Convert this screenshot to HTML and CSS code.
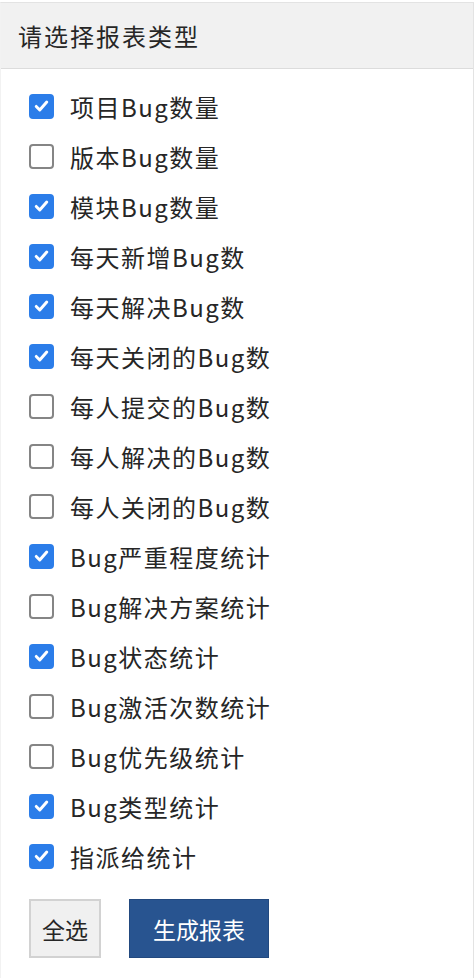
FILE: index.html
```html
<!DOCTYPE html>
<html lang="zh">
<head>
<meta charset="utf-8">
<link rel="stylesheet" href="styles.css">
</head>
<body>
<div class="panel">
  <div class="panel-head">请选择报表类型</div>
  <ul class="list">
    <li class="item"><span class="box on"><svg viewBox="0 0 24 24"><path d="M6 12.5l4 4 8-9"/></svg></span>项目Bug数量</li>
    <li class="item"><span class="box"></span>版本Bug数量</li>
    <li class="item"><span class="box on"><svg viewBox="0 0 24 24"><path d="M6 12.5l4 4 8-9"/></svg></span>模块Bug数量</li>
    <li class="item"><span class="box on"><svg viewBox="0 0 24 24"><path d="M6 12.5l4 4 8-9"/></svg></span>每天新增Bug数</li>
    <li class="item"><span class="box on"><svg viewBox="0 0 24 24"><path d="M6 12.5l4 4 8-9"/></svg></span>每天解决Bug数</li>
    <li class="item"><span class="box on"><svg viewBox="0 0 24 24"><path d="M6 12.5l4 4 8-9"/></svg></span>每天关闭的Bug数</li>
    <li class="item"><span class="box"></span>每人提交的Bug数</li>
    <li class="item"><span class="box"></span>每人解决的Bug数</li>
    <li class="item"><span class="box"></span>每人关闭的Bug数</li>
    <li class="item"><span class="box on"><svg viewBox="0 0 24 24"><path d="M6 12.5l4 4 8-9"/></svg></span>Bug严重程度统计</li>
    <li class="item"><span class="box"></span>Bug解决方案统计</li>
    <li class="item"><span class="box on"><svg viewBox="0 0 24 24"><path d="M6 12.5l4 4 8-9"/></svg></span>Bug状态统计</li>
    <li class="item"><span class="box"></span>Bug激活次数统计</li>
    <li class="item"><span class="box"></span>Bug优先级统计</li>
    <li class="item"><span class="box on"><svg viewBox="0 0 24 24"><path d="M6 12.5l4 4 8-9"/></svg></span>Bug类型统计</li>
    <li class="item"><span class="box on"><svg viewBox="0 0 24 24"><path d="M6 12.5l4 4 8-9"/></svg></span>指派给统计</li>
  </ul>
  <div class="actions">
    <button class="btn btn-default">全选</button>
    <button class="btn btn-primary">生成报表</button>
  </div>
</div>
</body>
</html>
```
FILE: styles.css
```css
html, body {
  margin: 0;
  padding: 0;
  background: #fff;
}
body {
  font-family: "Noto Sans CJK SC", "Noto Sans", sans-serif;
  color: #262626;
}
.panel {
  margin-top: 2px;
  width: 474px;
  height: 976px;
  box-sizing: border-box;
  border: 1px solid #e3e3e3;
  border-left-color: #f2f2f2;
  border-bottom: none;
}
.panel-head {
  height: 66px;
  box-sizing: border-box;
  background: #f1f1f1;
  border-bottom: 1px solid #dcdcdc;
  padding-left: 17px;
  display: flex;
  align-items: center;
  font-size: 24px;
  letter-spacing: 2px;
  color: #262626;
}
.list {
  list-style: none;
  margin: 0;
  padding: 12px 0 0 28px;
}
.item {
  height: 50px;
  display: flex;
  align-items: center;
  font-size: 24px;
  letter-spacing: 1.5px;
  color: #262626;
}
.box {
  width: 25px;
  height: 25px;
  box-sizing: border-box;
  border: 2px solid #858585;
  border-radius: 4px;
  background: #fff;
  margin-right: 16px;
  flex: none;
  display: flex;
  align-items: center;
  justify-content: center;
}
.box.on {
  background: #2b7de9;
  border-color: #2b7de9;
}
.box svg {
  width: 24px;
  height: 24px;
}
.box svg path {
  fill: none;
  stroke: #fff;
  stroke-width: 3.4;
  stroke-linecap: round;
  stroke-linejoin: round;
}
.actions {
  display: flex;
  gap: 28px;
  padding: 18px 0 0 28px;
}
.btn {
  height: 59px;
  box-sizing: border-box;
  font-family: "Noto Sans CJK SC", "Noto Sans", sans-serif;
  font-size: 23px;
  padding: 0;
  cursor: pointer;
}
.btn-default {
  width: 72px;
  background: #f0f0f0;
  border: 2px solid #d2d2d2;
  color: #262626;
}
.btn-primary {
  width: 140px;
  background: #285490;
  border: 1px solid #22497f;
  color: #fff;
}
```
